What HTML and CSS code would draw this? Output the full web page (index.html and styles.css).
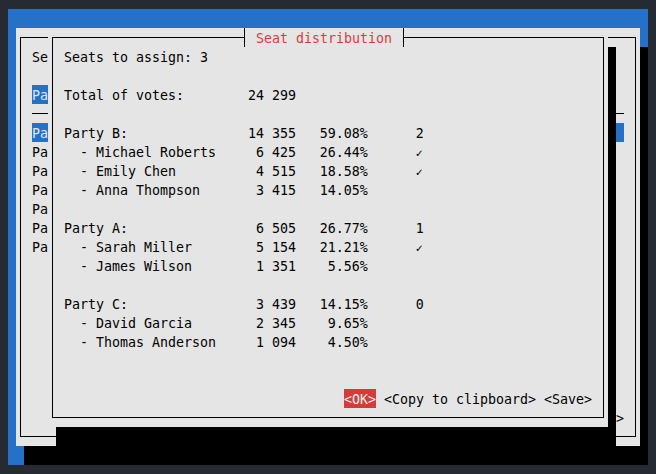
FILE: index.html
```html
<!DOCTYPE html>
<html>
<head>
<meta charset="utf-8">
<link rel="stylesheet" href="styles.css">
</head>
<body>
<div class="screen">
  <div class="dialog back">
    <div class="frame">
      <div class="line">Se</div>
      <div class="line"></div>
      <div class="line"><span class="hl">Pa</span></div>
      <div class="sep"></div>
      <div class="line sel">Pa</div>
      <div class="line">Pa</div>
      <div class="line">Pa</div>
      <div class="line">Pa</div>
      <div class="line">Pa</div>
      <div class="line">Pa</div>
      <div class="line">Pa</div>
      <div class="spacer"></div>
      <div class="line right">&gt;</div>
    </div>
  </div>

  <div class="dialog front">
    <div class="frame">
      <div class="line">Seats to assign: 3</div>
      <div class="line"></div>
      <div class="line">Total of votes:        24 299</div>
      <div class="line"></div>
      <div class="line">Party B:               14 355   59.08%      2</div>
      <div class="line">  - Michael Roberts     6 425   26.44%      <span class="chk">✓</span></div>
      <div class="line">  - Emily Chen          4 515   18.58%      <span class="chk">✓</span></div>
      <div class="line">  - Anna Thompson       3 415   14.05%</div>
      <div class="line"></div>
      <div class="line">Party A:                6 505   26.77%      1</div>
      <div class="line">  - Sarah Miller        5 154   21.21%      <span class="chk">✓</span></div>
      <div class="line">  - James Wilson        1 351    5.56%</div>
      <div class="line"></div>
      <div class="line">Party C:                3 439   14.15%      0</div>
      <div class="line">  - David Garcia        2 345    9.65%</div>
      <div class="line">  - Thomas Anderson     1 094    4.50%</div>
      <div class="spacer"></div>
      <div class="line buttons"><span class="btn-ok">&lt;OK&gt;</span> &lt;Copy to clipboard&gt; &lt;Save&gt;</div>
    </div>
    <div class="title">Seat distribution</div>
  </div>
</div>
</body>
</html>
```
FILE: styles.css
```css
html, body {
  margin: 0;
  padding: 0;
}
body {
  background: #262a33;
  width: 656px;
  height: 474px;
  overflow: hidden;
}
.screen {
  position: relative;
  width: 640px;
  height: 456px;
  margin: 9px 8px;
  background: #2471c7;
  overflow: hidden;
  font-family: "DejaVu Sans Mono", monospace;
  font-size: 13.29px;
  line-height: 19px;
  color: #000;
}
.dialog {
  position: absolute;
  top: 19px;
  background: #e5e5e5;
  box-shadow: 8px 19px 0 #000;
  padding: 9px 4px;
  box-sizing: border-box;
  display: flex;
  flex-direction: column;
}
.back {
  left: 8px;
  width: 624px;
  height: 418px;
}
.front {
  left: 40px;
  width: 560px;
  height: 399px;
}
.frame {
  flex: 1;
  border: 1px solid #000;
  padding: 9px 11px;
  display: flex;
  flex-direction: column;
  overflow: hidden;
}
.line {
  height: 19px;
  box-sizing: border-box;
  padding-top: 2px;
  line-height: 17px;
  white-space: pre;
}
.spacer {
  flex: 1;
}
.right {
  text-align: right;
}
.buttons {
  text-align: right;
}
.sep {
  height: 19px;
  background: linear-gradient(#000, #000) 0 9px / 100% 1px no-repeat;
}
.hl,
.btn-ok {
  display: inline-block;
  vertical-align: top;
  height: 19px;
  margin-top: -2px;
  padding-top: 2px;
  line-height: 17px;
  box-sizing: border-box;
}
.hl {
  background: #2471c7;
  color: #e5e5e5;
}
.sel {
  background: #2471c7;
  color: #e5e5e5;
}
.chk {
  font-size: 11.5px;
}
.btn-ok {
  background: #d63a3a;
  color: #f2f2f2;
}
.title {
  position: absolute;
  top: 0;
  left: 196px;
  width: 160px;
  height: 19px;
  box-sizing: border-box;
  border-left: 1px solid #000;
  border-right: 1px solid #000;
  background: #e5e5e5;
  padding: 2px 0 0 11px;
  line-height: 17px;
  color: #e0393e;
  white-space: pre;
}
```
